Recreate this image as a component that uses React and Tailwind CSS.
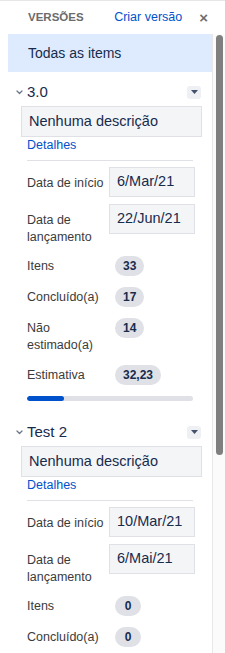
const FONT = { fontFamily: '"Liberation Sans", Arial, sans-serif' };

function Chevron() {
  return (
    <svg width="7" height="5" viewBox="0 0 7 5" className="shrink-0">
      <polyline
        points="1,1 3.5,3.5 6,1"
        fill="none"
        stroke="#6b778c"
        strokeWidth="1.3"
        strokeLinecap="round"
        strokeLinejoin="round"
      />
    </svg>
  );
}

function DropButton() {
  return (
    <button className="flex h-[13px] w-[14px] shrink-0 items-center justify-center rounded-[3px] bg-[#eef0f3]">
      <svg width="7" height="4" viewBox="0 0 7 4">
        <polygon points="0,0 7,0 3.5,4" fill="#42526e" />
      </svg>
    </button>
  );
}

function DateRow({ label, value }) {
  return (
    <div className="flex items-start">
      <span className="w-[82px] shrink-0 pt-[8px] text-[12.5px] leading-[17px] text-[#3b3b3b]">
        {label}
      </span>
      <div className="flex h-[30px] w-[86px] items-center border border-[#dfe1e6] bg-[#f4f5f7] px-[7px] text-[14.5px] text-[#172b4d]">
        {value}
      </div>
    </div>
  );
}

function StatRow({ label, value }) {
  return (
    <div className="flex items-start">
      <span className="w-[88px] shrink-0 pt-[2px] text-[12.5px] leading-[17px] text-[#3b3b3b]">
        {label}
      </span>
      <span className="flex h-[20px] min-w-[26px] items-center justify-center rounded-full bg-[#dfe1e6] px-[8px] text-[12px] font-bold text-[#172b4d]">
        {value}
      </span>
    </div>
  );
}

function Version({ name, start, release, stats, progress }) {
  return (
    <div>
      {/* title */}
      <div className="flex h-[24px] items-center pl-[8px] pr-[11px]">
        <Chevron />
        <span className="ml-[4px] flex-1 text-[15px] text-[#172b4d]">{name}</span>
        <DropButton />
      </div>
      <div className="ml-[13px] mt-[2px] flex h-[31px] w-[181px] items-center border border-[#dfe1e6] bg-[#f4f5f7] px-[7px] text-[14.5px] text-[#172b4d]">
        Nenhuma descrição
      </div>
      <div className="pl-[19px]">
        <a className="block text-[12.5px] leading-[16px] text-[#0052cc]">Detalhes</a>
        <div className="mt-[7px] h-px w-[166px] bg-[#dfe1e6]" />
        <div className="mt-[6px] flex flex-col gap-[7px]">
          <DateRow label="Data de início" value={start} />
          <DateRow label={<>Data de<br />lançamento</>} value={release} />
        </div>
        <div className="mt-[10px] flex flex-col gap-[11px]">
          {stats.map((s, i) => (
            <StatRow key={i} label={s[0]} value={s[1]} />
          ))}
        </div>
        {progress !== undefined && (
          <div className="mt-[11px] h-[5px] w-[166px] overflow-hidden rounded-full bg-[#dfe1e6]">
            <div className="h-full rounded-full bg-[#0052cc]" style={{ width: progress + '%' }} />
          </div>
        )}
      </div>
    </div>
  );
}

export default function App() {
  return (
    <div
      className="flex h-[653px] w-[225px] flex-col overflow-hidden border-t border-[#e6e6e6] bg-white"
      style={FONT}
    >
      {/* header */}
      <div className="flex h-[33px] shrink-0 items-center pl-[28px] pr-[17px]">
        <span className="text-[11.5px] font-bold uppercase text-[#6b6b6b]">Versões</span>
        <span className="ml-auto text-[12.5px] text-[#0052cc]">Criar versão</span>
        <span className="ml-[17px] text-[15px] font-bold leading-none text-[#6f6f6f]">×</span>
      </div>
      <div className="flex min-h-0 flex-1">
        <div className="w-[8px] shrink-0" />
        <div className="w-[205px] shrink-0 border-r border-[#e8e8e8]">
          <div className="flex h-[38px] items-center bg-[#deebff] pl-[20px] text-[14px] text-[#172b4d]">
            Todas as items
          </div>
          <div className="pt-[8px]">
            <Version
              name="3.0"
              start="6/Mar/21"
              release="22/Jun/21"
              stats={[
                ['Itens', '33'],
                ['Concluído(a)', '17'],
                [<>Não<br />estimado(a)</>, '14'],
                ['Estimativa', '32,23'],
              ]}
              progress={22}
            />
          </div>
          <div className="pt-[19px]">
            <Version
              name="Test 2"
              start="10/Mar/21"
              release="6/Mai/21"
              stats={[
                ['Itens', '0'],
                ['Concluído(a)', '0'],
                [<>Não<br />estimado(a)</>, '0'],
                ['Estimativa', '0'],
              ]}
            />
          </div>
        </div>
        <div className="flex-1 bg-[#fbfbfb] pl-[3px] pt-[1px]">
          <div className="h-[420px] w-[7px] rounded-full bg-[#7f7f7f]" />
        </div>
      </div>
    </div>
  );
}
